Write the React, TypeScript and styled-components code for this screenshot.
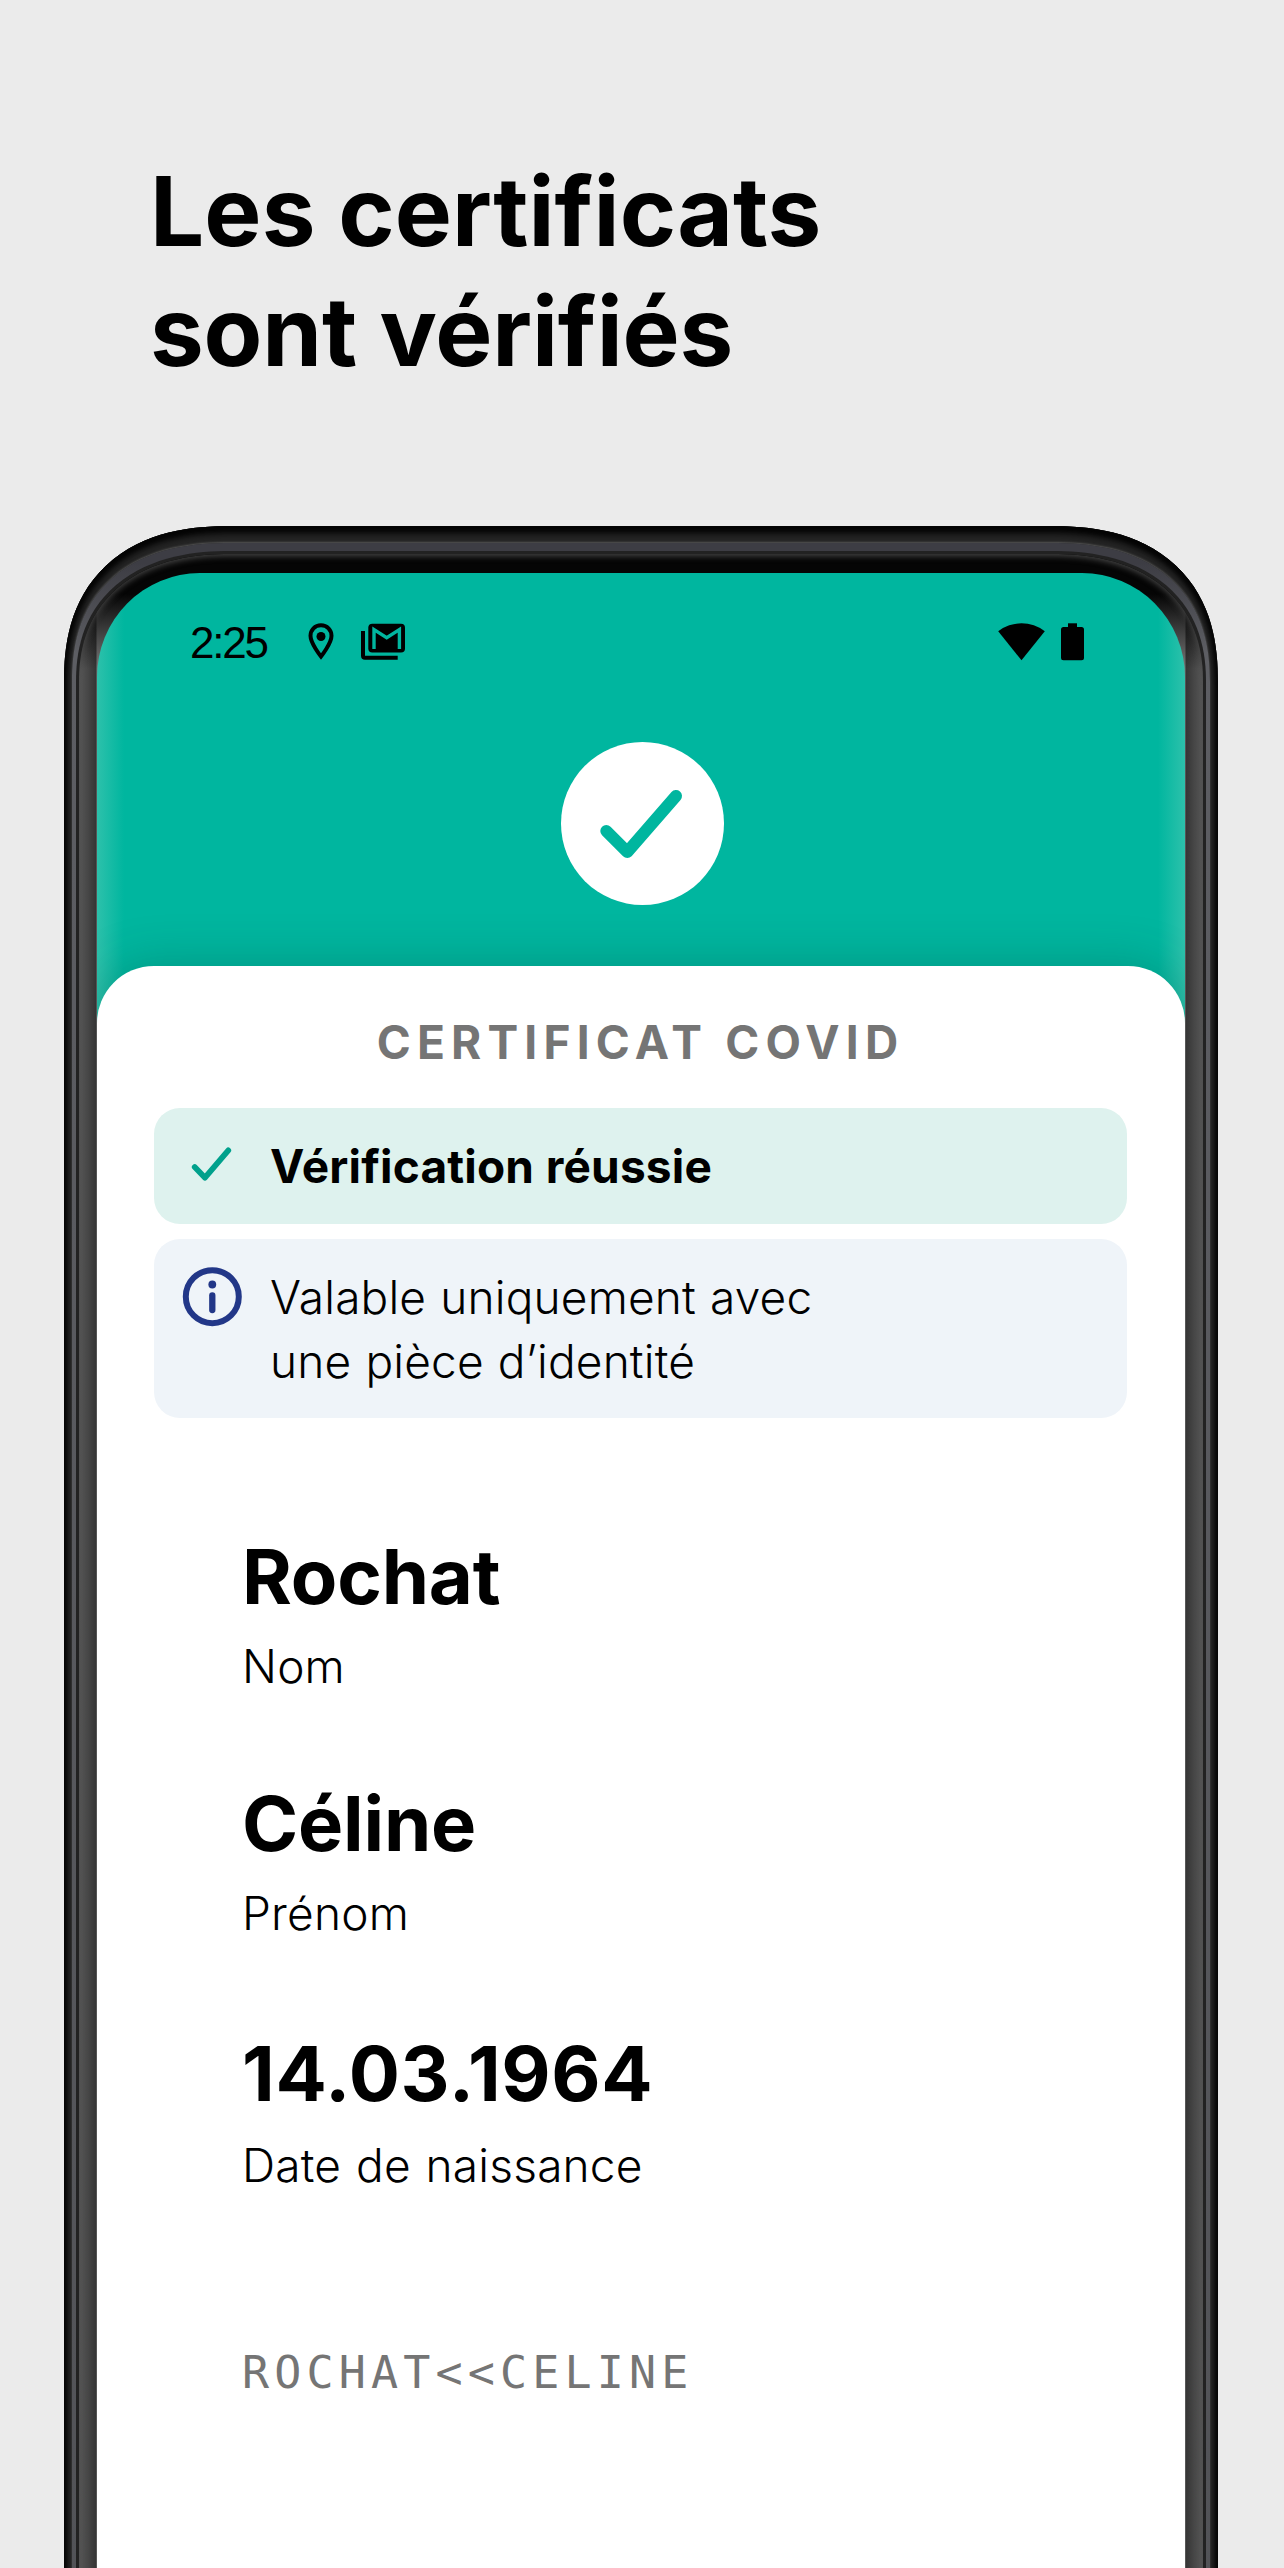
import React from 'react';
import styled, { createGlobalStyle } from 'styled-components';

const Global = createGlobalStyle`
  *{box-sizing:border-box}
  html,body{margin:0;background:#ebebeb}
  body{font-family:Inter,"Liberation Sans",sans-serif;color:#000}
  h1,h2,p,dl,dt,dd{margin:0}
`;

const Page = styled.main`
  width:1284px;height:2568px;overflow:hidden;background:#ebebeb;
  display:flex;flex-direction:column;
`;
const Headline = styled.h1`
  height:526px;flex:none;padding:151px 0 0 150px;
  font-size:96px;line-height:120px;font-weight:700;
`;
const HeadLine = styled.span<{$tracking?:number}>`
  display:block;letter-spacing:${p=>p.$tracking ?? 0}px;
`;
const Casing = styled.div`
  width:1154px;height:2250px;flex:none;margin-left:64px;padding:17px 8px 0;
  border-radius:144px 144px 0 0 / 136px 136px 0 0;
  background:#262626;
  box-shadow:inset 0 0 4px 3px #050505, inset 0 7px 9px #000;
  @supports (corner-shape:superellipse(1.25)){
    corner-shape:superellipse(1.25);
    border-radius:167px 167px 0 0 / 156px 156px 0 0;
  }
`;
const Rim = styled.div`
  height:100%;padding:8px 4px 0;
  border-radius:137px 137px 0 0 / 120px 120px 0 0;
  background:linear-gradient(#3d3d44 0,#3d3d44 20px,#5d5e63 110px,#515256);
  box-shadow:0 -1px 2px #555;
  @supports (corner-shape:superellipse(1.25)){
    corner-shape:superellipse(1.25);
    border-radius:159px 159px 0 0 / 139px 139px 0 0;
  }
`;
const Groove = styled.div`
  height:100%;padding:3px 3px 0;
  border-radius:133px 133px 0 0 / 113px 113px 0 0;
  background:#222;
  @supports (corner-shape:superellipse(1.2)){
    corner-shape:superellipse(1.2);
    border-radius:154px 154px 0 0 / 131px 131px 0 0;
  }
`;
const Bezel = styled.div`
  height:100%;padding:19px 18px 0;
  border-radius:130px 130px 0 0 / 110px 110px 0 0;
  background:
    linear-gradient(#050505 0,#050505 40px,rgba(5,5,5,0) 115px),
    linear-gradient(90deg,#5a5a5a,#353535 17px,#777 18px,#777 calc(100% - 18px),#353535 calc(100% - 17px),#5a5a5a);
  box-shadow:inset 0 2px 6px #484848;
  @supports (corner-shape:superellipse(1.2)){
    corner-shape:superellipse(1.2);
    border-radius:151px 151px 0 0 / 128px 128px 0 0;
  }
`;
const Screen = styled.section`
  height:100%;overflow:hidden;
  border-radius:103px 103px 0 0 / 104px 104px 0 0;
  background:linear-gradient(90deg,#2dc1ab,#00b69f 27px,#00b69f calc(100% - 27px),#2dc1ab);
  display:flex;flex-direction:column;
`;
const StatusBar = styled.div`
  height:169px;padding:50px 101px 0 93px;display:flex;align-items:flex-start;
`;
const Clock = styled.span`
  width:118px;margin-top:-2.5px;
  font:400 44px/44px "Liberation Sans",sans-serif;letter-spacing:-2.2px;
`;
const Glyph = styled.svg<{$gap?:number}>`
  display:block;flex:none;margin-left:${p=>p.$gap ?? 0}px;
`;
const Spacer = styled.span`flex:1;`;
const Hero = styled.div`height:224px;padding-left:2px;display:flex;justify-content:center;`;
const Sheet = styled.div`
  flex:1;background:#fff;border-radius:57px 57px 0 0;
  box-shadow:0 0 50px rgba(0,60,50,.28);padding:0 58px 0 57px;
  display:flex;flex-direction:column;
`;
const Title = styled.h2`
  height:142px;padding-top:48px;text-align:center;
  font-size:46px;line-height:56px;font-weight:700;letter-spacing:6.2px;color:#757575;
`;
const Notice = styled.div<{$bg:string;$h:number;$bold?:boolean}>`
  height:${p=>p.$h}px;margin-bottom:15px;border-radius:26px;background:${p=>p.$bg};
  display:flex;padding:26px 27px;
  font-size:46px;line-height:64px;font-weight:${p=>p.$bold?700:300};
  letter-spacing:${p=>p.$bold?.18:.17}px;word-spacing:${p=>p.$bold?.5:1}px;
`;
const Fields = styled.dl`padding:97px 0 0 88px;display:flex;flex-direction:column;`;
const Field = styled.div<{$h:number}>`height:${p=>p.$h}px;display:flex;flex-direction:column;`;
const Value = styled.dd<{$tracking?:number}>`
  font-size:76px;line-height:92px;font-weight:700;letter-spacing:${p=>p.$tracking ?? 0}px;
`;
const Label = styled.dt<{$top:number}>`
  font-size:46px;line-height:60px;font-weight:300;margin-top:${p=>p.$top}px;
  letter-spacing:.2px;word-spacing:1.7px;
`;
const Mrz = styled.p`
  padding:68px 0 0 88px;font:400 45px/60px "DejaVu Sans Mono",monospace;letter-spacing:5.15px;color:#757575;
`;

const fields = [
  {value:'Rochat',label:'Nom',height:247,gap:14,tracking:-.2},
  {value:'Céline',label:'Prénom',height:250,gap:14,tracking:-.2},
  {value:'14.03.1964',label:'Date de naissance',height:248,gap:16,tracking:.65},
];

const PinIcon = () => (
  <Glyph width="26" height="38" viewBox="0 0 26 38">
    <path d="M13 2.200C6.900 2.200 2.500 6.900 2.500 12.800c0 7.600 10.500 20.700 10.500 20.700S23.500 20.400 23.500 12.800C23.500 6.900 19.100 2.200 13 2.200Z" fill="none" stroke="#000" strokeWidth="4"/>
    <circle cx="13" cy="13.500" r="4.500"/>
  </Glyph>
);
const MailIcon = () => (
  <Glyph $gap={27} width="45" height="38" viewBox="0 0 45 38">
    <path d="M2 8v24.700q0 2 2 2h32.700" fill="none" stroke="#000" strokeWidth="4"/>
    <rect x="7.300" y=".7" width="36.700" height="28.700" rx="4"/>
    <path d="M13 26V6.500l12.700 8.200L38.400 6.500V26" fill="none" stroke="#00b69f" strokeWidth="3.400"/>
  </Glyph>
);
const WifiIcon = () => (
  <Glyph width="47" height="38" viewBox="0 0 47 38"><path d="M.2 8.300A37.800 37.800 0 0 1 46.800 8.300L23.500 37.300Z"/></Glyph>
);
const BatteryIcon = () => (
  <Glyph $gap={16} width="23" height="38" viewBox="0 0 23 38">
    <rect x="7" y=".3" width="9" height="6"/><rect y="4" width="23" height="33.300" rx="2.500"/>
  </Glyph>
);
const SuccessBadge = () => (
  <Glyph width="163" height="163" viewBox="0 0 163 163">
    <circle cx="81.500" cy="81.500" r="81.500" fill="#fff"/>
    <path d="M45.300 89l21 21L115 54" fill="none" stroke="#00b69f" strokeWidth="12" strokeLinecap="round" strokeLinejoin="round"/>
  </Glyph>
);
const CheckIcon = () => (
  <Glyph width="90" height="64" viewBox="0 0 90 64">
    <path d="M13.700 33L24 43.700 47.300 16.300" fill="none" stroke="#00a18c" strokeWidth="5.700" strokeLinecap="round" strokeLinejoin="round"/>
  </Glyph>
);
const InfoIcon = () => (
  <Glyph width="90" height="64" viewBox="0 0 90 64">
    <g fill="none" stroke="#223788" strokeLinecap="round">
      <circle cx="31.300" cy="31.700" r="26.500" strokeWidth="6"/>
      <path d="M31.300 30.500v14.500" strokeWidth="6.300"/>
    </g>
    <circle cx="31.300" cy="19.500" r="3.900" fill="#223788"/>
  </Glyph>
);
const NoticeText = styled.p`margin-left:-1px;`;

export default function App(){
  return <><Global/><Page>
    <Headline>
      <HeadLine $tracking={.08}>Les certificats</HeadLine>
      <HeadLine $tracking={-.15}>sont vérifiés</HeadLine>
    </Headline>
    <Casing><Rim><Groove><Bezel><Screen>
      <StatusBar>
        <Clock>2:25</Clock><PinIcon/><MailIcon/>
        <Spacer/>
        <WifiIcon/><BatteryIcon/>
      </StatusBar>
      <Hero><SuccessBadge/></Hero>
      <Sheet>
        <Title>CERTIFICAT COVID</Title>
        <Notice $bg="#def2ee" $h={116} $bold><CheckIcon/><NoticeText>Vérification réussie</NoticeText></Notice>
        <Notice $bg="#eff4f9" $h={179}><InfoIcon/><NoticeText>Valable uniquement avec<br/>une pièce d’identité</NoticeText></Notice>
        <Fields>
          {fields.map(f=><Field key={f.label} $h={f.height}>
            <Value $tracking={f.tracking}>{f.value}</Value><Label $top={f.gap}>{f.label}</Label>
          </Field>)}
        </Fields>
        <Mrz>ROCHAT&lt;&lt;CELINE</Mrz>
      </Sheet>
    </Screen></Bezel></Groove></Rim></Casing>
  </Page></>;
}
